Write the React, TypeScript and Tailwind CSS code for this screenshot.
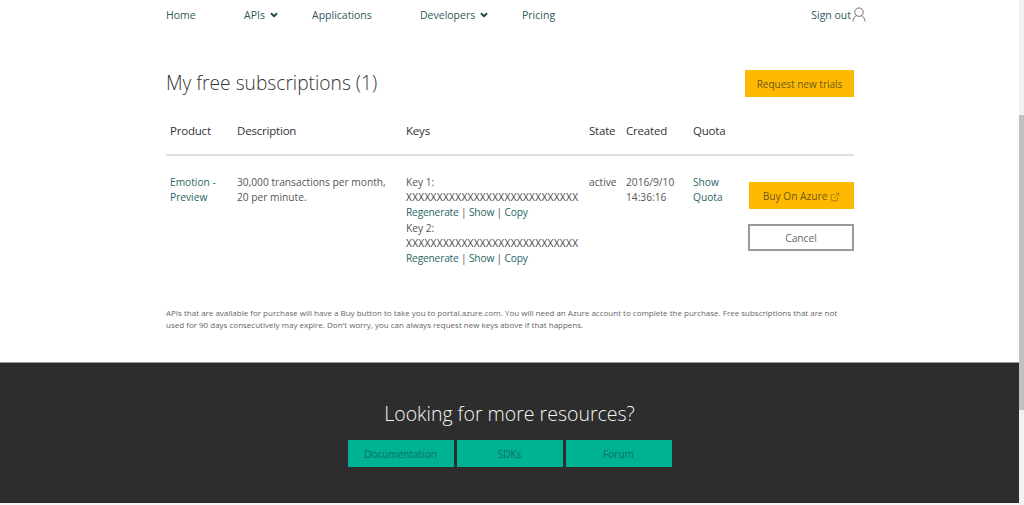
import React from 'react'
import { ChevronDown, ExternalLink } from 'lucide-react'

const NAV = [
  { label: 'Home', width: 'w-[78px]', caret: false },
  { label: 'APIs', width: 'w-[68px]', caret: true },
  { label: 'Applications', width: 'w-[108px]', caret: false },
  { label: 'Developers', width: 'w-[102px]', caret: true },
  { label: 'Pricing', width: 'w-[60px]', caret: false },
]

function KeyBlock({ name }: { name: string }) {
  return (
    <>
      <div>{name}:</div>
      <div className="whitespace-nowrap text-[#444] tracking-[0.27px]">XXXXXXXXXXXXXXXXXXXXXXXXXXXX</div>
      <div className="whitespace-nowrap tracking-[-0.18px] text-[#555]">
        <a className="text-[#2a6565]">Regenerate</a> | <a className="text-[#2a6565]">Show</a> | <a className="text-[#2a6565]">Copy</a>
      </div>
    </>
  )
}

export default function App() {
  return (
    <div className="flex h-[505px] w-[1024px] overflow-hidden bg-white font-['Open_Sans','Noto_Sans',sans-serif] text-[10.2px] leading-[15.2px] text-[#555]">
      <div className="flex w-[1019px] flex-col">
        <nav className="flex h-[30px] items-center pl-[166px] pr-[153px] pt-[1px] text-[10.5px] text-[#2f5a5a]">
          {NAV.map(n => (
            <a key={n.label} className={`flex items-center gap-[4px] ${n.width}`}>
              {n.label}
              {n.caret && <ChevronDown size={10} strokeWidth={4.5} className="text-[#1d4a4a]" />}
            </a>
          ))}
          <a className="ml-auto flex items-center gap-[1px]">
            Sign out
            <svg width="14" height="15" viewBox="0 0 15 16" fill="none" stroke="#666" strokeWidth="1" className="-mt-[1px]">
              <circle cx="7.5" cy="5.5" r="4.5" />
              <path d="M1 15.5c.4-3.6 2.4-6 4-6.2M14 15.5c-.4-3.6-2.4-6-4-6.2" />
            </svg>
          </a>
        </nav>

        <main className="flex flex-1 flex-col pl-[166px] pr-[165px]">
          <div className="mt-[40px] flex h-[27px] items-center justify-between">
            <h1 className="-mt-[3px] text-[19.2px] font-light leading-[27px] text-[#333]">My free subscriptions (1)</h1>
            <button className="flex h-[27px] w-[109px] items-center justify-center bg-[#ffb900] pt-[2px] text-[10px] text-[#6b5a1c]">
              Request new trials
            </button>
          </div>

          <div className="mt-[20px] grid h-[39px] grid-cols-[67px_169px_183px_37px_67px_55px_106px] border-b-2 border-[#dfdfdf] pl-[4px] text-[11.5px] leading-[28px] tracking-[-0.2px] text-[#333]">
            <div>Product</div>
            <div>Description</div>
            <div>Keys</div>
            <div>State</div>
            <div>Created</div>
            <div>Quota</div>
            <div />
          </div>

          <div className="mt-[19px] grid grid-cols-[67px_169px_183px_37px_67px_55px_106px] pl-[4px]">
            <a className="text-[#2a6565]">Emotion -<br />Preview</a>
            <div>30,000 transactions per month,<br />20 per minute.</div>
            <div>
              <KeyBlock name="Key 1" />
              <KeyBlock name="Key 2" />
            </div>
            <div>active</div>
            <div>2016/9/10<br />14:36:16</div>
            <a className="text-[#2a6565]">Show<br />Quota</a>
            <div className="mt-[7px] flex flex-col items-end gap-[15px]">
              <button className="flex h-[27px] w-[105px] items-center justify-center gap-[3px] bg-[#ffb900] pt-[2px] text-[#6b5a1c]">
                Buy On Azure
                <ExternalLink size={10} strokeWidth={1.25} />
              </button>
              <button className="flex h-[27px] w-[106px] items-center justify-center border-2 border-[#999] bg-white pt-[2px] text-[#666]">
                Cancel
              </button>
            </div>
          </div>

          <p className="mt-[41px] w-[688px] text-[8px] leading-[12px] text-[#666]">
            APIs that are available for purchase will have a Buy button to take you to portal.azure.com. You will need an Azure account to complete the purchase. Free subscriptions that are not used for 90 days consecutively may expire. Don't worry, you can always request new keys above if that happens.
          </p>
        </main>

        <footer className="flex h-[141px] flex-col items-center border-t border-[#999] bg-[#2d2d2d]">
          <h2 className="mt-[38px] text-[19.5px] font-light leading-[26px] text-[#f5f5f5]">Looking for more resources?</h2>
          <div className="mt-[13px] flex gap-[3px]">
            {['Documentation', 'SDKs', 'Forum'].map(label => (
              <a key={label} className="flex h-[27px] w-[106px] items-center justify-center bg-[#00b294] pt-[2px] text-[10px] text-[#0f6f62]">
                {label}
              </a>
            ))}
          </div>
        </footer>
        <div className="h-[2px] bg-[#f4f4f4]" />
      </div>

      <aside className="w-[5px] bg-[#f1f1f1] pt-[115px]">
        <div className="h-[295px] bg-[#c1c1c1]" />
      </aside>
    </div>
  )
}
